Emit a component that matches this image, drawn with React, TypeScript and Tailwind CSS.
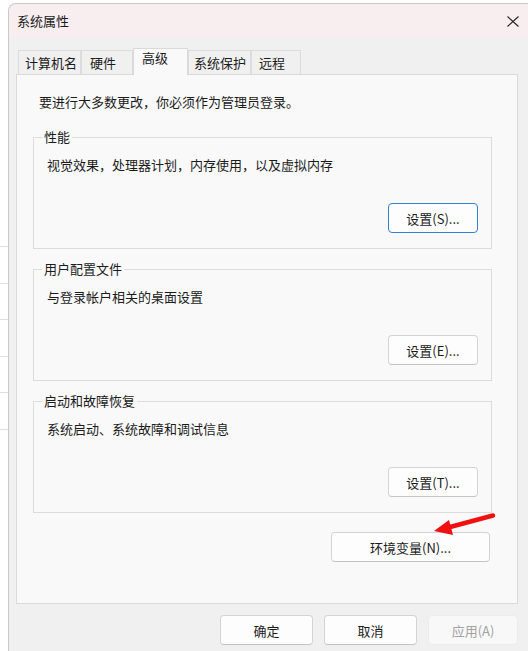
import React from 'react';

const font = { fontFamily: '"Noto Sans CJK SC", "Noto Sans", sans-serif' };

function WinButton({ label, primary = false, disabled = false, className = '' }: { label: string; primary?: boolean; disabled?: boolean; className?: string }) {
  const base = 'flex items-center justify-center h-[30px] rounded-[4px] text-[13px] leading-none';
  const tone = disabled
    ? 'bg-[#f8f8f8] border border-[#ececec] text-[#a3a3a3]'
    : primary
    ? 'bg-[#fdfdfd] border border-[#3282d4] text-[#1b1b1b]'
    : 'bg-[#fdfdfd] border border-[#d4d4d4] border-b-[#c4c4c4] text-[#1b1b1b]';
  return <div className={`${base} ${tone} ${className}`}>{label}</div>;
}

function Group({ title, text, button, primary = false }: { title: string; text: string; button: string; primary?: boolean }) {
  return (
    <div className="relative flex flex-col h-[112px] border border-[#dcdcdc] pt-[18px] pl-[13px] pr-[13px] pb-[15px]">
      <span className="absolute -top-[10px] left-[8px] px-[2px] bg-[#f9f9f9] text-[13px] leading-[18px] text-[#1b1b1b]">
        {title}
      </span>
      <p className="text-[13px] leading-[18px] text-[#1b1b1b]">{text}</p>
      <WinButton label={button} primary={primary} className="mt-auto self-end w-[90px]" />
    </div>
  );
}

const tabs = [
  { name: '计算机名', w: 'w-[63px]', pl: 'pl-[6px]' },
  { name: '硬件', w: 'w-[52px]', pl: 'pl-[8px]' },
  { name: '高级', w: 'w-[55px]', pl: 'pl-[8px]', active: true },
  { name: '系统保护', w: 'w-[63px]', pl: 'pl-[5px]' },
  { name: '远程', w: 'w-[50px]', pl: 'pl-[7px]' },
];

export default function App() {
  return (
    <div className="relative flex w-[528px] h-[651px] overflow-hidden bg-white" style={font}>
      {/* window behind */}
      <div className="w-[8px] shrink-0 pt-[246px] flex flex-col">
        {[0, 1, 2, 3, 4, 5].map((i) => (
          <div key={i} className="h-[36.5px] border-t border-[#dcdfe3]" />
        ))}
      </div>

      <div className="flex-1 mt-[3px] flex flex-col bg-[#f0f0f0] rounded-tl-[8px] border-t border-l border-[#c9c9c9]">
        <div className="flex items-center justify-between h-[33px] bg-[#f8eef0] pl-[8px] pr-[9px] rounded-tl-[8px]">
          <span className="text-[13px] text-[#1b1b1b]">系统属性</span>
          <svg width="12" height="11" viewBox="0 0 12 11" className="mt-[1px]">
            <path d="M0.5 0.5 L11.5 10.5 M11.5 0.5 L0.5 10.5" stroke="#222" strokeWidth="1.1" fill="none" />
          </svg>
        </div>

        <div className="flex flex-col pl-[7px] pr-[10px] pt-[11px]">
          <div className="flex items-end h-[27px] pl-[2px]">
            {tabs.map((t) =>
              t.active ? (
                <div
                  key={t.name}
                  className={`relative z-10 h-[27px] ${t.w} ${t.pl} pt-0 bg-[#f9f9f9] border-t border-l border-r border-[#d9d9d9] text-[13px] leading-[18px] text-[#1b1b1b]`}
                >
                  {t.name}
                </div>
              ) : (
                <div
                  key={t.name}
                  className={`h-[24px] mb-[1px] ${t.w} ${t.pl} pt-[3px] bg-[#f0f0f0] border-t border-l border-r border-[#dcdcdc] text-[13px] leading-[18px] text-[#1b1b1b]`}
                >
                  {t.name}
                </div>
              )
            )}
          </div>

          <div className="-mt-[1px] h-[530px] flex flex-col border border-[#d9d9d9] bg-[#f9f9f9] pt-[18px] pl-[16px] pr-[25px]">
            <p className="pl-[6px] text-[13px] leading-[18px] text-[#1b1b1b]">要进行大多数更改，你必须作为管理员登录。</p>
            <div className="mt-[26px]">
              <Group title="性能" text="视觉效果，处理器计划，内存使用，以及虚拟内存" button="设置(S)..." primary />
            </div>
            <div className="mt-[20px]">
              <Group title="用户配置文件" text="与登录帐户相关的桌面设置" button="设置(E)..." />
            </div>
            <div className="mt-[20px]">
              <Group title="启动和故障恢复" text="系统启动、系统故障和调试信息" button="设置(T)..." />
            </div>
            <WinButton label="环境变量(N)..." className="self-end w-[159px] mt-[19px] mr-[2px]" />
          </div>

          <div className="flex justify-end gap-[11px] mt-[11px]">
            <WinButton label="确定" className="w-[93px]" />
            <WinButton label="取消" className="w-[93px]" />
            <WinButton label="应用(A)" disabled className="w-[90px]" />
          </div>
        </div>
      </div>

      <svg className="absolute left-[428px] top-[508px]" width="72" height="32" viewBox="428 508 72 32">
        <path d="M493 515.5 L450 527" stroke="#f01010" strokeWidth="4.5" strokeLinecap="round" fill="none" />
        <path d="M434 531 L449 520 L453 535 Z" fill="#f01010" />
      </svg>
    </div>
  );
}
